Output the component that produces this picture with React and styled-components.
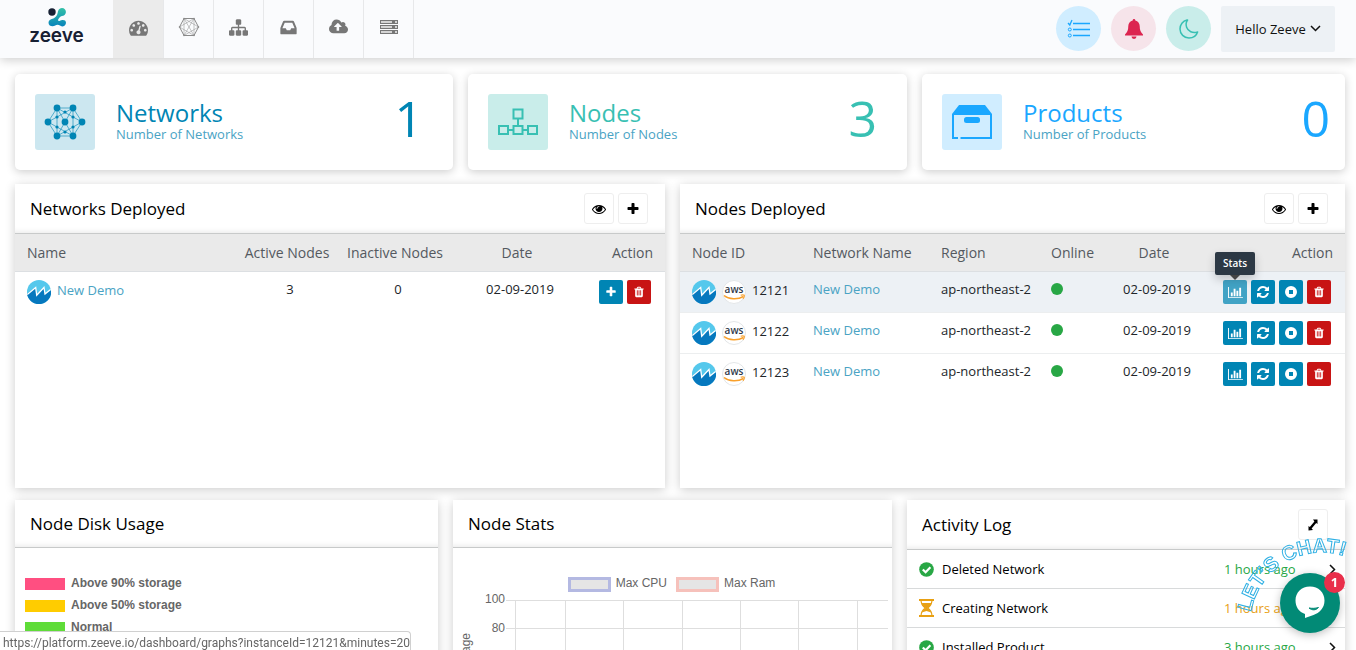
import React from "react";
import styled, { createGlobalStyle } from "styled-components";

const Global = createGlobalStyle`
  * { box-sizing: border-box; }
  body { margin: 0; background: #fff; color: #212529; font: 13px/20px "Open Sans", "Noto Sans", sans-serif; }
  a { color: inherit; text-decoration: none; }
  button { font: inherit; padding: 0; cursor: pointer; }
  svg { display: block; flex: none; }
`;

const shade = "0 2px 10px rgba(0, 0, 0, 0.2)";

const Shell = styled.div`
  height: 100vh;
  display: flex;
  flex-direction: column;
  overflow: hidden;
`;

const TopBar = styled.header`
  flex: none;
  position: relative;
  display: flex;
  align-items: center;
  height: 58px;
  padding-right: 21px;
  background: #fafbfd;
  box-shadow: 0 2px 10px rgba(0, 0, 0, 0.2);
`;

const Brand = styled.a`
  width: 113px;
  display: flex;
  flex-direction: column;
  align-items: center;
  color: #172033;
  font: 600 19px/18px Inter, sans-serif;
  padding-bottom: 6px;
`;

const Nav = styled.nav`
  display: flex;
  align-self: stretch;
  flex: 1;
  border-left: 1px solid #ebebeb;
`;

const NavItem = styled.a`
  width: 50px;
  padding-bottom: 4px;
  display: flex;
  align-items: center;
  justify-content: center;
  color: #777;
  border-right: 1px solid #e7e8ea;
  background: ${(p) => (p.$active ? "#ebebeb" : "transparent")};
`;

const Tools = styled.div`
  display: flex;
  align-items: center;
  gap: 10px;
  padding-bottom: 1px;
`;

const RoundButton = styled.button`
  width: 45px;
  height: 45px;
  border: 0;
  border-radius: 50%;
  display: flex;
  align-items: center;
  justify-content: center;
  color: ${(p) => p.$color};
  background: ${(p) => p.$bg};
`;

const UserButton = styled.button`
  display: flex;
  align-items: center;
  justify-content: center;
  gap: 4px;
  width: 114px;
  height: 46px;
  border: 0;
  border-radius: 2px;
  color: #111;
  background: #edf1f5;
`;

const Main = styled.main`
  flex: 1;
  min-height: 0;
  overflow-y: auto;
  scrollbar-width: none;
  padding: 16px 11px 16px 15px;
`;

const Grid = styled.div`
  display: grid;
  grid-template-columns: ${(p) => p.$cols};
  gap: 15px;
  margin-bottom: ${(p) => p.$gap || "0"};
`;

const SummaryCard = styled.section`
  display: flex;
  align-items: center;
  height: 96px;
  padding: 0 ${(p) => p.$end} 0 20px;
  border-radius: 5px;
  background: #fff;
  box-shadow: ${shade};
  color: ${(p) => p.$color};
`;

const SummaryIcon = styled.div`
  flex: none;
  width: 60px;
  height: 56px;
  border-radius: 3px;
  background: ${(p) => p.$bg};
`;

const SummaryText = styled.div`
  flex: 1;
  padding-left: 21px;
`;

const SummaryTitle = styled.h2`
  margin: 0;
  font-size: 24px;
  line-height: 24px;
  font-weight: 400;
`;

const SummaryNote = styled.p`
  margin: 0;
  color: #4aa3c4;
  line-height: 18px;
`;

const SummaryCount = styled.strong`
  font-weight: 400;
  font-size: 50px;
  line-height: 56px;
  padding-bottom: 8px;
`;

const Panel = styled.section`
  min-height: ${(p) => p.$min};
  background: #fff;
  box-shadow: ${shade};
`;

const PanelHead = styled.div`
  display: flex;
  align-items: center;
  gap: 4px;
  height: ${(p) => p.$h || "50px"};
  padding: 0 17px 0 15px;
  border-bottom: 1px solid #c8caca;
  box-shadow: inset 0 -6px 6px -6px rgba(0, 0, 0, 0.12);
`;

const PanelTitle = styled.h3`
  flex: 1;
  margin: 0;
  font-size: 17px;
  line-height: 24px;
  font-weight: 400;
  color: #000;
`;

const OutlineButton = styled.button`
  width: 30px;
  height: 31px;
  display: flex;
  align-items: center;
  justify-content: center;
  border: 1px solid #eee;
  border-radius: 3px;
  background: #fff;
  color: #000;
`;

const Table = styled.table`
  width: 100%;
  table-layout: fixed;
  border-collapse: separate;
  border-spacing: 0;
`;

const Th = styled.th`
  height: 38px;
  padding: 0 ${(p) => (p.$align === "center" ? "18px" : "12px")} 0 12px;
  background: #eaeaea;
  border-bottom: 1px solid #dcdfe2;
  color: #54595f;
  font-size: 14px;
  font-weight: 400;
  white-space: nowrap;
  text-align: ${(p) => p.$align || "left"};
`;

const HeadLabel = styled.span`
  display: flex;
  justify-content: ${(p) => (p.$align === "center" ? "center" : p.$align === "right" ? "flex-end" : "flex-start")};
`;

const Tr = styled.tr`
  background: ${(p) => (p.$active ? "#edf1f5" : "#fff")};
`;

const Td = styled.td`
  padding: 8px 12px;
  vertical-align: top;
  white-space: nowrap;
  line-height: 18px;
  text-align: ${(p) => p.$align || "left"};
  border-bottom: ${(p) => (p.$line ? "1px solid #eceeef" : "0")};
`;

const NameCell = styled.div`
  display: flex;
  gap: 6px;
  line-height: 20px;
`;

const TextLink = styled.a`
  color: #4aa3c4;
`;

const Online = styled.span`
  display: block;
  width: 12px;
  height: 12px;
  margin-top: 3px;
  border-radius: 50%;
  background: #28a745;
`;

const Actions = styled.div`
  display: flex;
  justify-content: flex-end;
  gap: 4px;
  margin-right: 2px;
`;

const ActionButton = styled.a`
  flex: none;
  position: relative;
  width: 24px;
  height: 24px;
  display: flex;
  align-items: center;
  justify-content: center;
  border-radius: 2px;
  color: #fff;
  background: ${(p) => (p.$danger ? "#c81414" : p.$active ? "#41a3c5" : "#0085b4")};
`;

const Tooltip = styled.span`
  position: absolute;
  bottom: 29px;
  left: -8px;
  width: 40px;
  height: 23px;
  border-radius: 2px;
  background: #2c3844;
  box-shadow: 0 4px 10px rgba(0, 0, 0, 0.2);
  font-size: 10px;
  font-weight: 600;
  line-height: 22px;
  text-align: center;
  &::after {
    content: "";
    position: absolute;
    top: 23px;
    left: 15px;
    border: 5px solid transparent;
    border-top-color: #444;
  }
`;

const DiskLegend = styled.ul`
  list-style: none;
  margin: 0;
  padding: 24px 10px;
  font: bold 12px/22px "Liberation Sans", Arial, sans-serif;
  color: #666;
`;

const DiskItem = styled.li`
  display: flex;
  align-items: center;
  gap: 6px;
`;

const Swatch = styled.span`
  width: 40px;
  height: 12px;
  margin-top: 2px;
  background: ${(p) => p.$color};
`;

const ChartLegend = styled.div`
  display: flex;
  justify-content: center;
  gap: 9px;
  padding: 25px 2px 0 0;
  font: 12px/20px "Liberation Sans", Arial, sans-serif;
  color: #666;
`;

const SeriesLabel = styled.span`
  display: flex;
  align-items: center;
  gap: 5px;
`;

const SeriesBox = styled.span`
  width: 43px;
  height: 15px;
  margin-top: 2px;
  border: 3px solid ${(p) => p.$color};
  background: #e5e5e5;
`;

const Log = styled.ul`
  list-style: none;
  margin: 0;
  padding: 0;
`;

const LogRow = styled.li`
  display: flex;
  align-items: center;
  height: 39px;
  padding: 0 9px 0 12px;
  border-bottom: 1px solid #d8dadb;
  color: #000;
`;

const LogText = styled.span`
  flex: 1;
  padding-left: 8px;
`;

const LogTime = styled.span`
  width: 105px;
  color: ${(p) => p.$color};
`;

const Chat = styled.div`
  position: fixed;
  right: 0;
  bottom: 0;
  width: 136px;
  height: 120px;
  pointer-events: none;
`;

const ChatButton = styled.button`
  position: absolute;
  right: 16px;
  bottom: 17px;
  width: 60px;
  height: 60px;
  border: 0;
  border-radius: 50%;
  background: #028a76;
  box-shadow: 0 2px 8px rgba(0, 0, 0, 0.25);
  pointer-events: auto;
`;

const Badge = styled.span`
  position: absolute;
  top: -1px;
  right: -5px;
  width: 21px;
  height: 21px;
  border-radius: 50%;
  background: #e92f4b;
  color: #fff;
  font-weight: 700;
  line-height: 20px;
  text-align: center;
`;

const UrlHint = styled.div`
  position: fixed;
  left: 0;
  bottom: 0;
  height: 19px;
  padding: 0 0 0 3px;
  border: 1px solid #d0d0d0;
  border-width: 1px 1px 0 0;
  border-top-right-radius: 4px;
  background: #fff;
  color: #666;
  font: 12px/22px Roboto, sans-serif;
`;

const glyphs = {
  plus: [1792, "M1600 736v192q0 40-28 68t-68 28h-416v416q0 40-28 68t-68 28h-192q-40 0-68-28t-28-68v-416h-416q-40 0-68-28t-28-68v-192q0-40 28-68t68-28h416v-416q0-40 28-68t68-28h192q40 0 68 28t28 68v416h416q40 0 68 28t28 68z"],
  eye: [1792, "M1664 960q-152-236-381-353 61 104 61 225 0 185-131.5 316.5t-316.5 131.5-316.5-131.5-131.5-316.5q0-121 61-225-229 117-381 353 133 205 333.5 326.5t434.5 121.5 434.5-121.5 333.5-326.5zm-720-384q0-20-14-34t-34-14q-125 0-214.5 89.5t-89.5 214.5q0 20 14 34t34 14 34-14 14-34q0-86 61-147t147-61q20 0 34-14t14-34zm848 384q0 34-20 69-140 230-376.5 368.5t-499.5 138.5-499.5-139-376.5-368q-20-35-20-69t20-69q140-229 376.5-368t499.5-139 499.5 139 376.5 368q20 35 20 69z"],
  trash: [1792, "M704 1376v-704q0-14-9-23t-23-9h-64q-14 0-23 9t-9 23v704q0 14 9 23t23 9h64q14 0 23-9t9-23zm256 0v-704q0-14-9-23t-23-9h-64q-14 0-23 9t-9 23v704q0 14 9 23t23 9h64q14 0 23-9t9-23zm256 0v-704q0-14-9-23t-23-9h-64q-14 0-23 9t-9 23v704q0 14 9 23t23 9h64q14 0 23-9t9-23zm-544-992h448l-48-117q-7-9-17-11h-317q-10 2-17 11zm928 32v64q0 14-9 23t-23 9h-96v948q0 83-47 143.5t-113 60.5h-832q-66 0-113-58.5t-47-141.5v-952h-96q-14 0-23-9t-9-23v-64q0-14 9-23t23-9h309l70-167q15-37 54-63t79-26h320q40 0 79 26t54 63l70 167h309q14 0 23 9t9 23z"],
  refresh: [1792, "M1639 1056q0 5-1 7-64 268-268 434.5t-478 166.5q-146 0-282.5-55t-243.5-157l-129 129q-19 19-45 19t-45-19-19-45v-448q0-26 19-45t45-19h448q26 0 45 19t19 45-19 45l-137 137q71 66 161 102t187 36q134 0 250-65t186-179q11-17 53-117 8-23 30-23h192q13 0 22.5 9.5t9.5 22.5zm25-800v448q0 26-19 45t-45 19h-448q-26 0-45-19t-19-45 19-45l138-138q-148-137-349-137-134 0-250 65t-186 179q-11 17-53 117-8 23-30 23h-199q-13 0-22.5-9.5t-9.5-22.5v-7q65-268 270-434.5t480-166.5q146 0 284 55.5t245 156.5l130-129q19-19 45-19t45 19 19 45z"],
  chart: [2048, "M640 896v512h-256v-512h256zm384-512v1024h-256v-1024h256zm1024 1152v128h-2048v-1536h128v1408h1920zm-640-896v768h-256v-768h256zm384-384v1152h-256v-1152h256z"],
  gauge: [1792, "M384 1152q0-53-37.5-90.5t-90.5-37.5-90.5 37.5-37.5 90.5 37.5 90.5 90.5 37.5 90.5-37.5 37.5-90.5zm192-448q0-53-37.5-90.5t-90.5-37.5-90.5 37.5-37.5 90.5 37.5 90.5 90.5 37.5 90.5-37.5 37.5-90.5zm428 481l101-382q6-26-7.5-48.5t-38.5-29.5-48 6.5-30 39.5l-101 382q-60 5-107 43.5t-63 98.5q-20 77 20 146t117 89 146-20 89-117q16-60-6-117t-72-91zm660-33q0-53-37.5-90.5t-90.5-37.5-90.5 37.5-37.5 90.5 37.5 90.5 90.5 37.5 90.5-37.5 37.5-90.5zm-640-640q0-53-37.5-90.5t-90.5-37.5-90.5 37.5-37.5 90.5 37.5 90.5 90.5 37.5 90.5-37.5 37.5-90.5zm448 192q0-53-37.5-90.5t-90.5-37.5-90.5 37.5-37.5 90.5 37.5 90.5 90.5 37.5 90.5-37.5 37.5-90.5zm320 448q0 261-141 483-19 29-54 29h-1402q-35 0-54-29-141-221-141-483 0-182 71-348t191-286 286-191 348-71 348 71 286 191 191 286 71 348z"],
  sitemap: [1792, "M1792 1248v320q0 40-28 68t-68 28h-320q-40 0-68-28t-28-68v-320q0-40 28-68t68-28h96v-192h-512v192h96q40 0 68 28t28 68v320q0 40-28 68t-68 28h-320q-40 0-68-28t-28-68v-320q0-40 28-68t68-28h96v-192h-512v192h96q40 0 68 28t28 68v320q0 40-28 68t-68 28h-320q-40 0-68-28t-28-68v-320q0-40 28-68t68-28h96v-192q0-52 38-90t90-38h512v-192h-96q-40 0-68-28t-28-68v-320q0-40 28-68t68-28h320q40 0 68 28t28 68v320q0 40-28 68t-68 28h-96v192h512q52 0 90 38t38 90v192h96q40 0 68 28t28 68z"],
  inbox: [1792, "M1151 960h316q-1-3-2.5-8.5t-2.5-7.5l-212-496h-708l-212 496q-1 3-2.5 8.5t-2.5 7.5h316l95 192h320zm513 30v482q0 26-19 45t-45 19h-1408q-26 0-45-19t-19-45v-482q0-62 25-123l238-552q10-25 36.5-42t52.5-17h832q26 0 52.5 17t36.5 42l238 552q25 61 25 123z"],
  upload: [1920, "M1280 864q0-14-9-23l-352-352q-9-9-23-9t-23 9l-351 351q-10 12-10 24 0 14 9 23t23 9h224v352q0 13 9.5 22.5t22.5 9.5h192q13 0 22.5-9.5t9.5-22.5v-352h224q13 0 22.5-9.5t9.5-22.5zm640 288q0 159-112.5 271.5t-271.5 112.5h-1088q-185 0-316.5-131.5t-131.5-316.5q0-130 70-240t188-165q-2-30-2-43 0-212 150-362t362-150q156 0 285.5 87t188.5 231q71-62 166-62 106 0 181 75t75 181q0 76-41 138 130 31 213.5 135.5t83.5 238.5z"],
};

function Glyph({ name, size = 14 }) {
  const [w, d] = glyphs[name];
  return (
    <svg width={Math.round((size * w) / 1792)} height={size} viewBox={`0 0 ${w} 1792`} fill="currentColor" aria-hidden="true">
      <path d={d} />
    </svg>
  );
}

const LogoMark = () => (
  <svg width="20" height="20" viewBox="0 0 20 20" aria-hidden="true">
    <defs>
      <linearGradient id="mark" x1="0" y1="0" x2="0" y2="1">
        <stop offset="0" stopColor="#33c1a8" />
        <stop offset="1" stopColor="#0884bb" />
      </linearGradient>
    </defs>
    <circle cx="5" cy="5" r="3.7" fill="#172033" />
    <path
      fill="url(#mark)"
      d="M15 1a4 4 0 0 1 3.900 4.200c-.2 2.500-2 3.500-4 3.900-1.900.5-3 2-3.700 3.500-.5 1.200 .600 1.700 1.700 1.100C14.500 12.700 18.900 12 19 15.700c0 3.500-4.300 4.600-6 2.900-1.200-1-3.500-1-4.800-.1C6 20.200 1.500 19.300 1.500 15.800c0-2.700 2.200-3.700 4-4.100 2-.6 3.500-1.900 4.600-4 .7-1.400 .7-2.900 1.100-3.900C11.900 1.900 13.300 1 15 1z"
    />
  </svg>
);

const HexIcon = () => (
  <svg width="22" height="20" viewBox="0 0 22 20" fill="none" stroke="#8a8a8a" strokeWidth="1" aria-hidden="true">
    <path d="M6 1.500h10L20.500 10 16 18.500H6L1.500 10z" />
    <path strokeWidth="0.500" d="M6 1.500L16 18.500M16 1.500L6 18.500M1.500 10L16 1.500M1.500 10L16 18.500M20.500 10L6 1.500M20.500 10L6 18.500M6 1.500v17M16 1.500v17" />
    <path strokeWidth="1.600" strokeLinecap="round" d="M6 1.500h.01M16 1.500h.01M20.500 10h.01M16 18.500h.01M6 18.500h.01M1.500 10h.01" />
  </svg>
);

const ServerIcon = () => (
  <svg width="18" height="15" viewBox="0 0 18 15" aria-hidden="true">
    {[0, 5, 10].map((y) => (
      <g key={y}>
        <rect x="0" y={y} width="18" height="4" fill="#777" />
        <rect x="1" y={y + 1} width="11" height="2" fill="#d4d4d4" />
        <rect x="15" y={y + 1} width="2" height="2" fill="#d4d4d4" />
      </g>
    ))}
  </svg>
);

const ListIcon = () => (
  <svg width="24" height="20" viewBox="0 0 24 20" fill="none" stroke="#1aa7ff" aria-hidden="true">
    <path strokeWidth="1.300" d="M1 4l1.800 2L5 1M6 4.500h17M6 10.500h17M6 16.500h17" />
    <circle cx="2.800" cy="10.500" r="1.500" />
    <circle cx="2.800" cy="16.500" r="1.500" />
  </svg>
);

const BellIcon = () => (
  <svg width="18" height="20" viewBox="0 0 18 20" fill="currentColor" aria-hidden="true">
    <path d="M9 0c.8 0 1.300.6 1.300 1.400C13 2 14.700 4.200 14.700 7c0 4 1 6.300 3.300 8.500v1H0v-1C2.300 13.300 3.300 11 3.300 7c0-2.800 1.700-5 4.400-5.600C7.700.6 8.200 0 9 0z" />
    <path d="M6.500 17.500h5a2.500 2.500 0 0 1-5 0z" />
  </svg>
);

const MoonIcon = () => (
  <svg width="20" height="20" viewBox="0 0 20 20" fill="none" stroke="#38c0b3" strokeWidth="1.500" strokeLinejoin="round" aria-hidden="true">
    <path d="M8 1C3.800 2 1 5.800 1 10c0 5 4 9 9 9 4 0 7.500-2.500 8.600-6-5 1.600-9.600-.6-11-4.700C6.800 5.800 7 3 8.600 1z" />
  </svg>
);

const Chevron = ({ right }) => (
  <svg width={right ? 7 : 11} height={right ? 11 : 7} viewBox={right ? "0 0 7 11" : "0 0 11 7"} fill="none" stroke="#111" strokeWidth="1.500" aria-hidden="true">
    <path d={right ? "M1 1l4.500 4.500L1 10" : "M1 1l4.500 4.500L10 1"} />
  </svg>
);

const StopIcon = () => (
  <svg width="12" height="12" viewBox="0 0 12 12" fill="currentColor" aria-hidden="true">
    <path fillRule="evenodd" d="M6 0a6 6 0 1 1 0 12A6 6 0 0 1 6 0zM4 4v4h4V4z" />
  </svg>
);

const ExpandIcon = () => (
  <svg width="10" height="12" viewBox="0 0 10 12" aria-hidden="true">
    <path d="M5 .5h4.500V5L8.200 4 3.600 9.400 5 11 .5 11.500V7l1.300 1L6.400 2.600z" />
  </svg>
);

const CheckIcon = () => (
  <svg width="15" height="15" viewBox="0 0 15 15" aria-hidden="true">
    <circle cx="7.500" cy="7.500" r="7.300" fill="#28a745" />
    <path d="M3.800 7.500l2.800 2.800 4.800-5" fill="none" stroke="#fff" strokeWidth="2.200" />
  </svg>
);

const HourglassIcon = () => (
  <svg width="15" height="18" viewBox="0 0 15 18" fill="none" stroke="#e8a013" aria-hidden="true">
    <path strokeWidth="1.800" d="M0 1h15M0 17h15" />
    <path strokeWidth="1.200" d="M2 1c0 4 1.500 6 4.300 8C3.500 11 2 13 2 17M13 1c0 4-1.500 6-4.300 8 2.800 2 4.300 4 4.300 8" />
    <path fill="#e8a013" stroke="none" d="M2.500 4h10C12 6.500 10.500 8 8.300 9c1.500 1 3.200 2.500 4 4.500L7.500 12l-4.800 1.500c.8-2 2.500-3.500 4-4.500C4.500 8 3 6.500 2.500 4z" />
  </svg>
);

const hubs = [[22, 14], [38, 14], [13, 28], [30, 28], [47, 28], [22, 42], [38, 42]];
const relays = [[30, 18], [22, 23], [38, 23], [22, 33], [38, 33], [30, 38]];

const MeshIcon = () => (
  <svg width="60" height="56" viewBox="0 0 60 56" fill="#0085b4" aria-hidden="true">
    <path
      fill="none"
      stroke="#0085b4"
      strokeWidth="0.600"
      d="M22 14H38L47 28 38 42H22L13 28zM22 14V42M38 14V42M22 14L38 42M38 14L22 42M13 28L38 14M13 28L38 42M47 28L22 14M47 28L22 42"
    />
    {hubs.map(([x, y]) => <circle key={`${x}-${y}`} cx={x} cy={y} r="3.400" />)}
    {relays.map(([x, y]) => <circle key={`${x}-${y}`} cx={x} cy={y} r="1.600" />)}
  </svg>
);

const TreeIcon = () => (
  <svg width="60" height="56" viewBox="0 0 60 56" fill="none" stroke="#38c0b3" strokeWidth="2" aria-hidden="true">
    <rect x="25.500" y="15.500" width="9" height="9" />
    <rect x="11" y="32" width="9" height="8" />
    <rect x="25.500" y="32" width="9" height="8" />
    <rect x="40" y="32" width="9" height="8" />
    <path d="M30 24.500V32M20 36h5.500M34.500 36H40" />
  </svg>
);

const BoxIcon = () => (
  <svg width="60" height="56" viewBox="0 0 60 56" fill="#1aa7ff" aria-hidden="true">
    <path d="M17 11h26l7 9v1H10v-1z" />
    <rect x="22" y="23" width="16" height="6" rx="2.500" />
    <path d="M11 20v24h5M18.500 44H49V20" fill="none" stroke="#1aa7ff" strokeWidth="2" />
  </svg>
);

const NetworkLogo = () => (
  <svg width="24" height="24" viewBox="0 0 24 24" aria-hidden="true">
    <circle cx="12" cy="12" r="12" fill="#55c8ec" />
    <path fill="#0678be" d="M0 14L8.500 7.500 9.500 15 17 7.500 18 14 24 10A12 12 0 1 1 0 14z" />
    <path fill="none" stroke="#fff" strokeWidth="1.300" d="M.3 14.500L8.700 7.500 9.700 15.300 17 7.500 18 14 23.600 9.500" />
  </svg>
);

const AwsLogo = () => (
  <svg width="24" height="24" viewBox="0 0 24 24" aria-hidden="true">
    <circle cx="12" cy="12" r="11.500" fill="#fff" stroke="#e3e6e8" />
    <text x="12" y="13" textAnchor="middle" fontFamily="Open Sans, sans-serif" fontWeight="600" fontSize="10" fill="#303a4b">aws</text>
    <path d="M2 15.500c5 4 13.500 4.500 19.500 1" fill="none" stroke="#f9a02b" strokeWidth="1.500" />
    <path d="M18.700 15.300c1.500-.5 2.700-.5 3.600 0 .2 1.200-.3 2.500-1.300 3.500" fill="none" stroke="#f9a02b" strokeWidth="1.100" />
  </svg>
);

const summaries = [
  { title: "Networks", count: 1, color: "#0085b4", bg: "#cce7f0", end: "30px", Icon: MeshIcon },
  { title: "Nodes", count: 3, color: "#38c0b3", bg: "#c9edea", end: "30px", Icon: TreeIcon },
  { title: "Products", count: 0, color: "#1aa7ff", bg: "#d0edff", end: "15px", Icon: BoxIcon },
];

const networkCols = [["Name", 221], ["Active Nodes", 108, "center"], ["Inactive Nodes", 108, "center"], ["Date", 136, "center"], ["Action", 77, "right"]];
const nodeCols = [["Node ID", 121], ["Network Name", 128], ["Region", 110], ["Online", 62], ["Date", 112, "center"], ["Action", 132, "right"]];

const nodes = ["12121", "12122", "12123"];

const disk = [["Above 90% storage", "#ff4f81"], ["Above 50% storage", "#ffcc00"], ["Normal", "#5fdc38"]];

const activity = [
  ["Deleted Network", "1 hours ago", true],
  ["Creating Network", "1 hours ago", false],
  ["Installed Product", "3 hours ago", true],
];

const Columns = ({ cols }) => (
  <>
    <colgroup>
      {cols.map(([name, width]) => <col key={name} width={width} />)}
    </colgroup>
    <thead>
      <tr>
        {cols.map(([name, , align]) => (
          <Th key={name} $align={align}>
            <HeadLabel $align={align}>{name}</HeadLabel>
          </Th>
        ))}
      </tr>
    </thead>
  </>
);

const DeployedHead = ({ title }) => (
  <PanelHead>
    <PanelTitle>{title}</PanelTitle>
    <OutlineButton aria-label="View all"><Glyph name="eye" /></OutlineButton>
    <OutlineButton aria-label="Add"><Glyph name="plus" size={14} /></OutlineButton>
  </PanelHead>
);

const StatsChart = () => (
  <svg width="100%" viewBox="0 0 439 180" fill="#666" fontFamily="Liberation Sans, Arial, sans-serif" fontSize="12" aria-label="Node stats chart">
    <g stroke="#dedede">
      {[7.5, 35.5, 63.5, 91.5, 119.5, 147.5].map((y) => <path key={y} d={`M53 ${y}H435`} />)}
      {[62.5, 112.5, 170.5, 229.5, 287.5, 345.5, 404.5].map((x) => <path key={x} d={`M${x} 7V148`} />)}
    </g>
    {[100, 80, 60, 40, 20, 0].map((v, i) => <text key={v} x="52" y={10 + i * 29} textAnchor="end">{v}</text>)}
    <text transform="translate(17 40) rotate(-90)" textAnchor="end">Percentage</text>
  </svg>
);

export default function App() {
  return (
    <Shell>
      <Global />
      <TopBar>
        <Brand href="#"><LogoMark />zeeve</Brand>
        <Nav>
          <NavItem href="#" $active aria-label="Dashboard"><Glyph name="gauge" size={19} /></NavItem>
          <NavItem href="#" aria-label="Networks"><HexIcon /></NavItem>
          <NavItem href="#" aria-label="Nodes"><Glyph name="sitemap" size={19} /></NavItem>
          <NavItem href="#" aria-label="Inbox"><Glyph name="inbox" size={19} /></NavItem>
          <NavItem href="#" aria-label="Upload"><Glyph name="upload" size={18} /></NavItem>
          <NavItem href="#" aria-label="Servers"><ServerIcon /></NavItem>
        </Nav>
        <Tools>
          <RoundButton $bg="#d0edff" $color="#1aa7ff" aria-label="Tasks"><ListIcon /></RoundButton>
          <RoundButton $bg="#f6e4ea" $color="#dc2550" aria-label="Notifications"><BellIcon /></RoundButton>
          <RoundButton $bg="#c9edea" $color="#38c0b3" aria-label="Dark mode"><MoonIcon /></RoundButton>
          <UserButton>Hello Zeeve <Chevron /></UserButton>
        </Tools>
      </TopBar>
      <Main>
        <Grid $cols="438fr 439fr 423fr" $gap="14px">
          {summaries.map(({ title, count, color, bg, end, Icon }) => (
            <SummaryCard key={title} $color={color} $end={end}>
              <SummaryIcon $bg={bg}><Icon /></SummaryIcon>
              <SummaryText>
                <SummaryTitle>{title}</SummaryTitle>
                <SummaryNote>Number of {title}</SummaryNote>
              </SummaryText>
              <SummaryCount>{count}</SummaryCount>
            </SummaryCard>
          ))}
        </Grid>
        <Grid $cols="650fr 665fr" $gap="12px">
          <Panel $min="304px">
            <DeployedHead title="Networks Deployed" />
            <Table>
              <Columns cols={networkCols} />
              <tbody>
                <Tr>
                  <Td><NameCell><NetworkLogo /><TextLink href="#">New Demo</TextLink></NameCell></Td>
                  <Td $align="center">3</Td>
                  <Td $align="center">0</Td>
                  <Td $align="center">02-09-2019</Td>
                  <Td>
                    <Actions>
                      <ActionButton href="#" aria-label="Add node"><Glyph name="plus" size={12} /></ActionButton>
                      <ActionButton href="#" $danger aria-label="Delete"><Glyph name="trash" size={12} /></ActionButton>
                    </Actions>
                  </Td>
                </Tr>
              </tbody>
            </Table>
          </Panel>
          <Panel $min="304px">
            <DeployedHead title="Nodes Deployed" />
            <Table>
              <Columns cols={nodeCols} />
              <tbody>
                {nodes.map((id, i) => {
                  const line = i < nodes.length - 1;
                  return (
                    <Tr key={id} $active={i === 0}>
                      <Td $line={line}><NameCell><NetworkLogo /><AwsLogo />{id}</NameCell></Td>
                      <Td $line={line}><TextLink href="#">New Demo</TextLink></Td>
                      <Td $line={line}>ap-northeast-2</Td>
                      <Td $line={line}><Online role="img" aria-label="Online" /></Td>
                      <Td $line={line} $align="center">02-09-2019</Td>
                      <Td $line={line}>
                        <Actions>
                          <ActionButton href="#" $active={i === 0} aria-label="Stats">
                            <Glyph name="chart" size={13} />
                            {i === 0 && <Tooltip role="tooltip">Stats</Tooltip>}
                          </ActionButton>
                          <ActionButton href="#" aria-label="Restart"><Glyph name="refresh" size={14} /></ActionButton>
                          <ActionButton href="#" aria-label="Stop"><StopIcon /></ActionButton>
                          <ActionButton href="#" $danger aria-label="Delete"><Glyph name="trash" size={12} /></ActionButton>
                        </Actions>
                      </Td>
                    </Tr>
                  );
                })}
              </tbody>
            </Table>
          </Panel>
        </Grid>
        <Grid $cols="423fr 439fr 438fr">
          <Panel $min="300px">
            <PanelHead $h="48px"><PanelTitle>Node Disk Usage</PanelTitle></PanelHead>
            <DiskLegend>
              {disk.map(([label, color]) => <DiskItem key={label}><Swatch $color={color} />{label}</DiskItem>)}
            </DiskLegend>
          </Panel>
          <Panel $min="300px">
            <PanelHead $h="48px"><PanelTitle>Node Stats</PanelTitle></PanelHead>
            <ChartLegend>
              <SeriesLabel><SeriesBox $color="#b4b9e2" />Max CPU</SeriesLabel>
              <SeriesLabel><SeriesBox $color="#f6c1bb" />Max Ram</SeriesLabel>
            </ChartLegend>
            <StatsChart />
          </Panel>
          <Panel $min="300px">
            <PanelHead>
              <PanelTitle>Activity Log</PanelTitle>
              <OutlineButton aria-label="Expand"><ExpandIcon /></OutlineButton>
            </PanelHead>
            <Log>
              {activity.map(([label, time, done]) => (
                <LogRow key={label}>
                  {done ? <CheckIcon /> : <HourglassIcon />}
                  <LogText>{label}</LogText>
                  <LogTime $color={done ? "#28a745" : "#e8a013"}>{time}</LogTime>
                  <Chevron right />
                </LogRow>
              ))}
            </Log>
          </Panel>
        </Grid>
      </Main>
      <Chat>
        <svg width="136" height="120" viewBox="0 0 136 120" aria-hidden="true">
          <path id="chat-arc" d="M31 82A72 72 0 0 1 134 30" fill="none" />
          <text fontFamily="Liberation Sans, Arial, sans-serif" fontSize="20" fontWeight="700" fill="none" stroke="#2fb0e4" strokeWidth="1">
            <textPath href="#chat-arc">LET’S CHAT!</textPath>
          </text>
        </svg>
        <ChatButton aria-label="Open chat">
          <svg width="60" height="60" viewBox="0 0 60 60" aria-hidden="true">
            <path fill="#fff" d="M30 13.500c8.500 0 14.500 6 14.500 14 0 7.500-5 12.500-11 14.500L25 45v-4c-6-2-9.500-7-9.500-13.500 0-8 6-14 14.500-14z" />
            <path d="M29 35c3 2.500 7 2.500 9.500-.5-3.500 1-6 1-9.500.5z" fill="#028a76" stroke="#028a76" />
          </svg>
          <Badge>1</Badge>
        </ChatButton>
      </Chat>
      <UrlHint>https://platform.zeeve.io/dashboard/graphs?instanceId=12121&amp;minutes=20</UrlHint>
    </Shell>
  );
}
